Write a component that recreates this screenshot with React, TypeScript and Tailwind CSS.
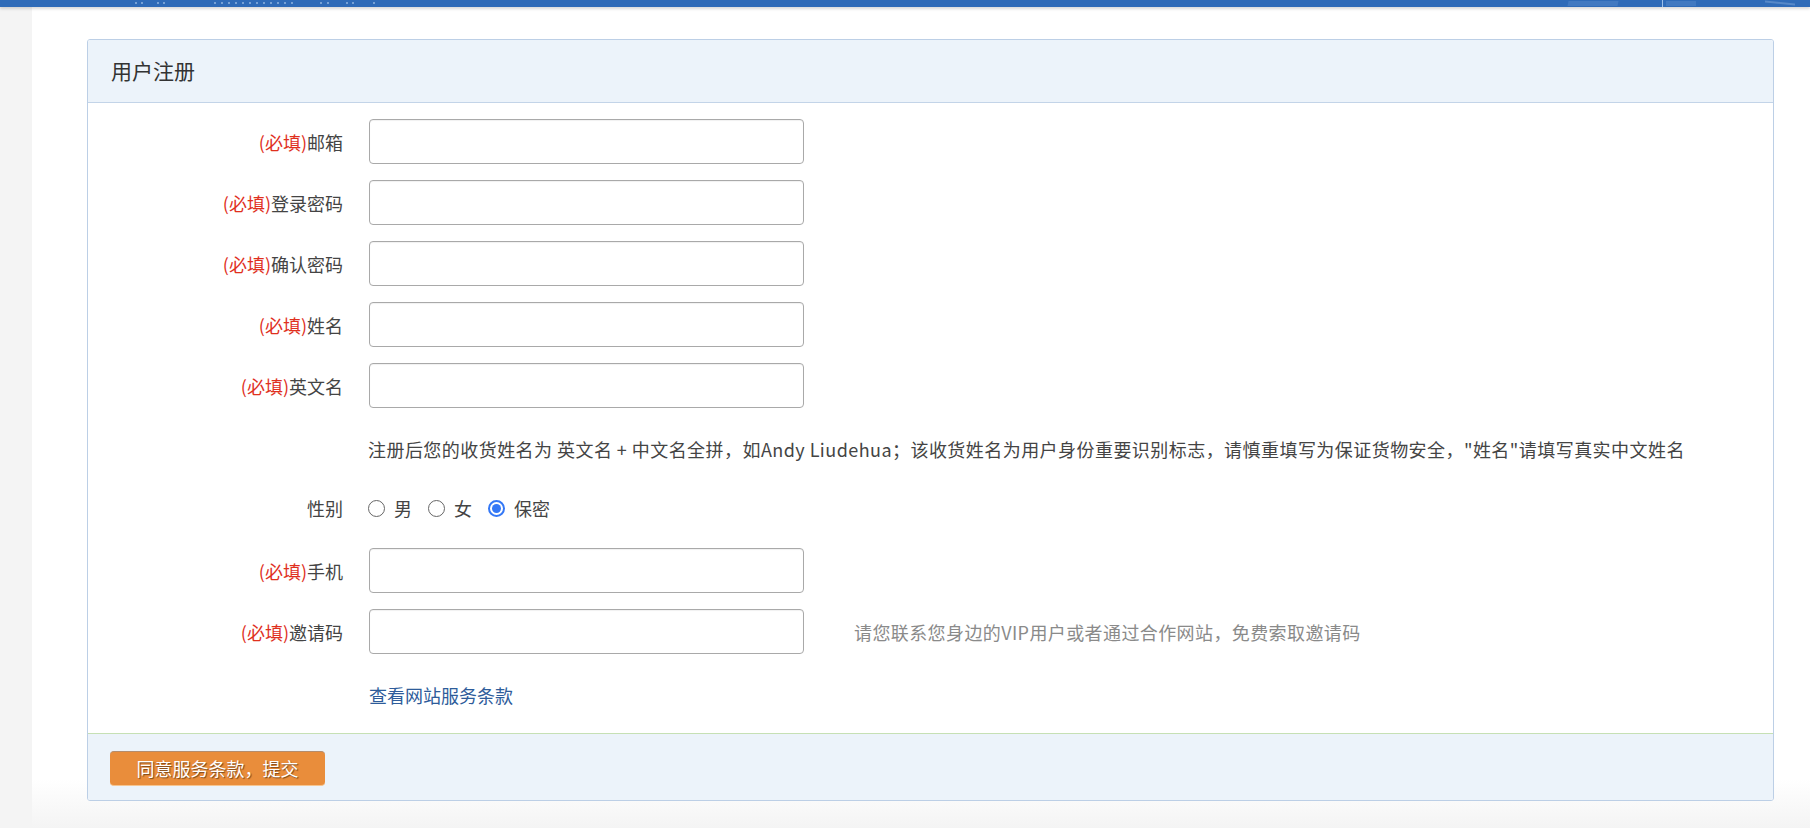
const font = "font-['Noto_Sans_CJK_SC','Noto_Sans',sans-serif]";

const fields = [
  { label: "邮箱", required: true },
  { label: "登录密码", required: true },
  { label: "确认密码", required: true },
  { label: "姓名", required: true },
  { label: "英文名", required: true },
];

function Label({ text, required }: { text: string; required?: boolean }) {
  return (
    <div className="w-[255px] shrink-0 text-right text-[18px] leading-[24px] text-[#444]">
      {required && <span className="text-[#e0301e]">(必填)</span>}
      {text}
    </div>
  );
}

function InputRow({ label, required, hint }: { label: string; required?: boolean; hint?: string }) {
  return (
    <div className="flex items-center h-[45px]">
      <Label text={label} required={required} />
      <input
        type="text"
        className="ml-[26px] w-[435px] h-[45px] shrink-0 rounded-[4px] border border-[#a9a9a9] bg-white outline-none shadow-[inset_0_1px_1px_rgba(0,0,0,0.06)]"
      />
      {hint && <span className="ml-[50px] text-[18px] leading-[24px] tracking-[0.4px] text-[#8a8a8a]">{hint}</span>}
    </div>
  );
}

function Radio({ label, checked }: { label: string; checked?: boolean }) {
  return (
    <label className="flex items-center">
      {checked ? (
        <span className="w-[17px] h-[17px] rounded-full border-2 border-[#3478f6] flex items-center justify-center">
          <span className="w-[9px] h-[9px] rounded-full bg-[#3478f6]" />
        </span>
      ) : (
        <span className="w-[17px] h-[17px] rounded-full border border-[#666] bg-white" />
      )}
      <span className="ml-[9px] text-[18px] leading-[24px] text-[#444]">{label}</span>
    </label>
  );
}

function TopBar() {
  const dots = [135, 141, 157, 163, 214, 221, 228, 235, 242, 249, 256, 263, 270, 277, 284, 291, 320, 327, 346, 352, 373];
  return (
    <div className="relative h-[7px] bg-[#2f6bb8] shadow-[0_2px_3px_rgba(0,0,0,0.15)] z-10">
      {dots.map((x, i) => (
        <span key={i} className="absolute top-[2px] w-[2px] h-[2px] rounded-full bg-[#8fb3e0]" style={{ left: x }} />
      ))}
      <span className="absolute left-[1568px] top-[1px] w-[50px] h-[5px] bg-[#5d8fcf] opacity-40 -skew-x-12" />
      <span className="absolute left-[1662px] top-0 w-[1px] h-[7px] bg-[#9cc0ea]" />
      <span className="absolute left-[1666px] top-[1px] w-[30px] h-[5px] bg-[#5d8fcf] opacity-40" />
      <span className="absolute left-[1765px] top-[2px] w-[30px] h-[2px] bg-[#7ea6d8] opacity-50 skew-y-6" />
    </div>
  );
}

export default function App() {
  return (
    <div className={`w-[1810px] h-[828px] overflow-hidden bg-white flex flex-col ${font}`}>
      <TopBar />
      <div className="flex flex-1">
        <div className="w-[32px] shrink-0 bg-[#f4f4f4]" />
        <div className="flex-1 flex flex-col bg-gradient-to-b from-white from-[94%] to-[#f4f4f4]">
          <div className="pl-[55px] pr-[36px] pt-[32px]">
            <div className="rounded-[3px] border border-[#bccfe6] bg-white overflow-hidden">
              {/* header */}
              <div className="h-[63px] bg-[#ecf3fa] border-b border-[#c3d4e8] flex items-center pl-[23px]">
                <span className="text-[21px] text-[#333]">用户注册</span>
              </div>

              {/* body */}
              <div className="pt-[16px] pb-[25px]">
                <div className="flex flex-col gap-[16px]">
                  {fields.map(f => (
                    <InputRow key={f.label} label={f.label} required={f.required} />
                  ))}
                </div>

                <div className="mt-[29px] pl-[280px] text-[18px] leading-[24px] tracking-[0.45px] text-[#444] whitespace-nowrap">
                  注册后您的收货姓名为 英文名 + 中文名全拼，如Andy Liudehua；该收货姓名为用户身份重要识别标志，请慎重填写为保证货物安全，"姓名"请填写真实中文姓名
                </div>

                <div className="mt-[35px] flex items-center h-[24px]">
                  <Label text="性别" />
                  <div className="ml-[25px] flex items-center gap-[16px]">
                    <Radio label="男" />
                    <Radio label="女" />
                    <Radio label="保密" checked />
                  </div>
                </div>

                <div className="mt-[28px] flex flex-col gap-[16px]">
                  <InputRow label="手机" required />
                  <InputRow label="邀请码" required hint="请您联系您身边的VIP用户或者通过合作网站，免费索取邀请码" />
                </div>

                <div className="mt-[29px] pl-[281px]">
                  <a href="#" className="text-[18px] leading-[24px] text-[#2e5c9a]">查看网站服务条款</a>
                </div>
              </div>

              {/* footer */}
              <div className="h-[67px] bg-[#ecf3fa] border-t border-[#c6e0b4] pl-[22px] pt-[17px]">
                <button className="w-[215px] h-[35px] rounded-[4px] bg-[#e98d3b] border-t border-t-[#b48c6c] border-b border-b-[#f6c590] text-white text-[18px] [text-shadow:1px_1px_1px_#7a4618]">
                  同意服务条款，提交
                </button>
              </div>
            </div>
          </div>
        </div>
      </div>
    </div>
  );
}
